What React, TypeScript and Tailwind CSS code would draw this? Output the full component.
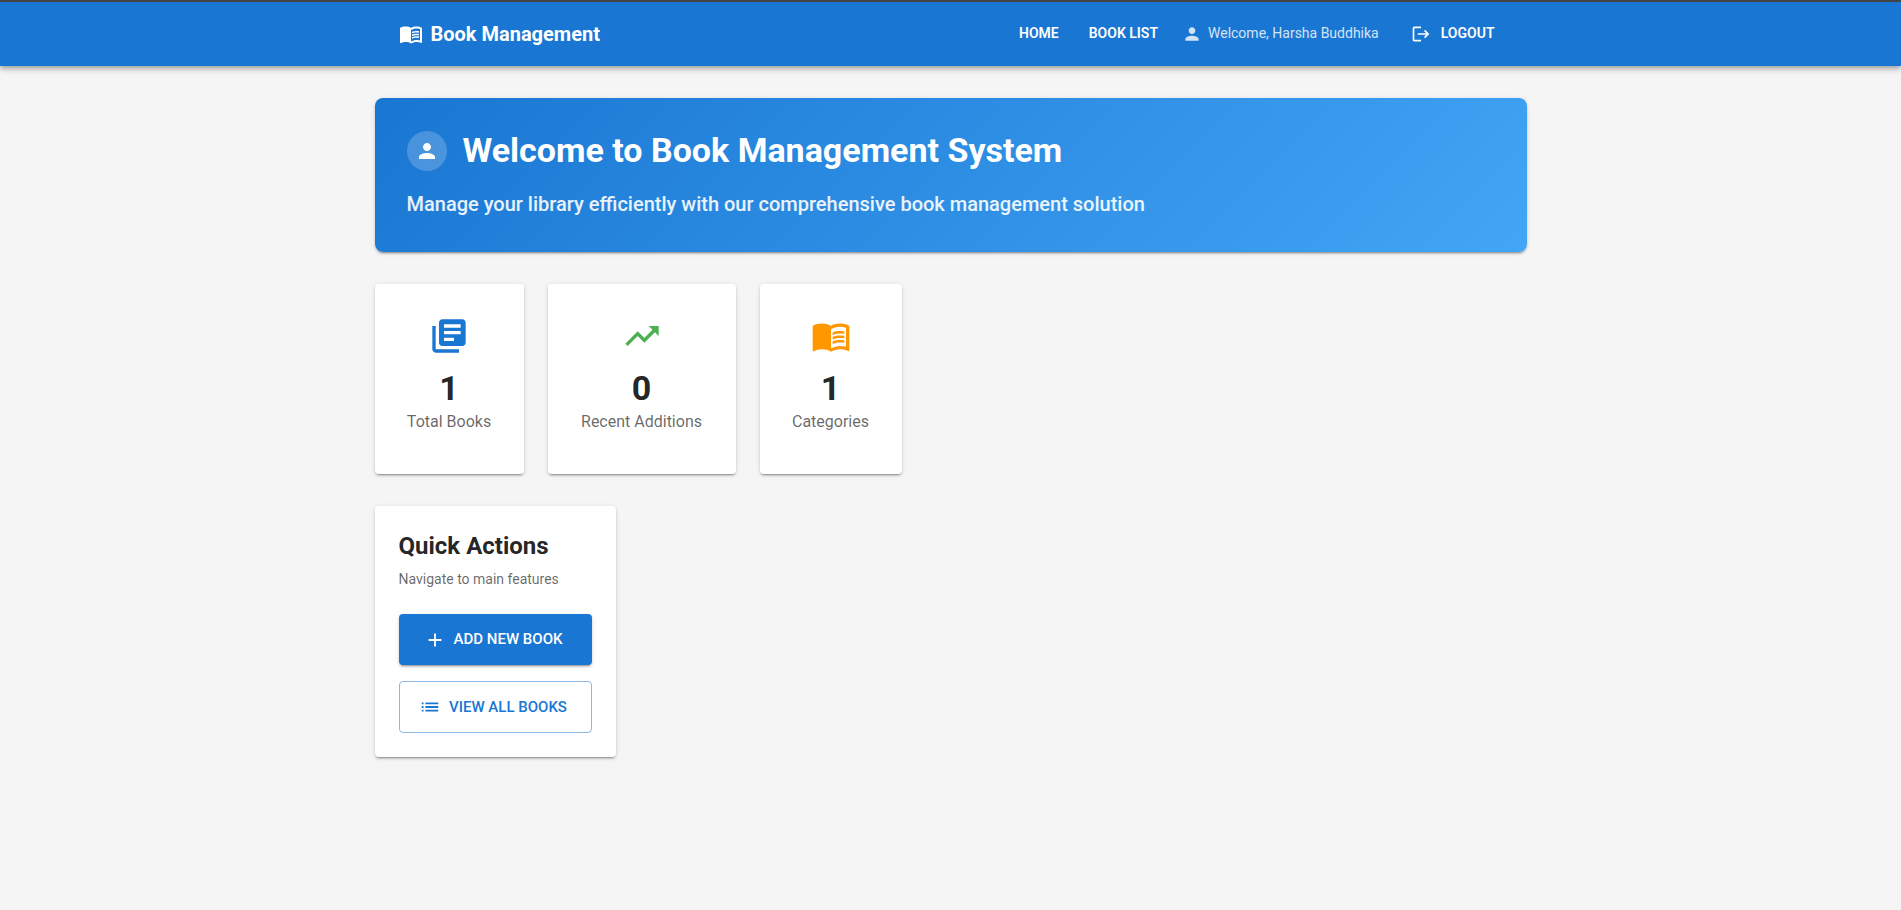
import type { ReactNode } from "react";
import {
  MdAdd,
  MdLibraryBooks,
  MdList,
  MdLogout,
  MdMenuBook,
  MdPerson,
  MdTrendingUp,
} from "react-icons/md";

const cardShadow =
  "shadow-[0px_3px_1px_-2px_rgba(0,0,0,0.2),0px_2px_2px_0px_rgba(0,0,0,0.14),0px_1px_5px_0px_rgba(0,0,0,0.12)]";

function Header() {
  return (
    <header className="border-t-2 border-[#424242] bg-[#1976d2] text-white shadow-[0px_2px_4px_-1px_rgba(0,0,0,0.2),0px_4px_5px_0px_rgba(0,0,0,0.14),0px_1px_10px_0px_rgba(0,0,0,0.12)]">
      <div className="mx-auto flex h-16 max-w-[1152px] items-center justify-between px-6">
        <a href="#home" className="flex items-center gap-2 text-xl font-bold">
          <MdMenuBook className="size-6" />
          Book Management
        </a>
        <nav className="flex items-center text-sm">
          <a href="#home" className="px-2 pb-0.5 font-semibold">
            HOME
          </a>
          <a href="#books" className="ml-3.5 px-2 pb-0.5 font-semibold">
            BOOK LIST
          </a>
          <span className="ml-4 flex items-center gap-1.5">
            <MdPerson className="size-5 opacity-80" />
            <span className="pb-0.5 opacity-80">Welcome, Harsha Buddhika</span>
          </span>
          <button type="button" className="ml-6 flex items-center gap-2.5 px-2 font-semibold">
            <MdLogout className="size-5" />
            <span className="pb-0.5">LOGOUT</span>
          </button>
        </nav>
      </div>
    </header>
  );
}

function Hero() {
  return (
    <section
      className={`rounded-lg bg-[linear-gradient(135deg,#1976d2_0%,#42a5f5_100%)] p-8 text-white ${cardShadow}`}
    >
      <div className="mb-4 flex items-center gap-4">
        <span className="flex size-10 items-center justify-center rounded-full bg-white/20">
          <MdPerson className="size-6" />
        </span>
        <h1 className="pb-0.5 text-[34px] leading-10 font-bold">Welcome to Book Management System</h1>
      </div>
      <p className="text-xl leading-8 font-medium text-white/90">
        Manage your library efficiently with our comprehensive book management solution
      </p>
    </section>
  );
}

type StatProps = { icon: ReactNode; value: number; label: string; width: string };

function StatCard({ icon, value, label, width }: StatProps) {
  return (
    <div
      className={`flex flex-col items-center rounded bg-white pt-8 pb-10 whitespace-nowrap ${width} ${cardShadow}`}
    >
      {icon}
      <p className="mt-3 pb-0.5 text-[34px] leading-10 font-bold">{value}</p>
      <p className="text-base text-black/60">{label}</p>
    </div>
  );
}

function QuickActions() {
  return (
    <section className={`w-[241px] rounded bg-white p-6 ${cardShadow}`}>
      <h2 className="text-2xl font-bold">Quick Actions</h2>
      <p className="mt-2 pb-0.5 text-sm leading-[18px] text-black/60">Navigate to main features</p>
      <div className="mt-6 flex flex-col gap-4 text-[15px] font-medium">
        <button
          type="button"
          className="flex h-[51px] items-center justify-center gap-2 rounded bg-[#1976d2] pr-1 text-white shadow-[0px_3px_1px_-2px_rgba(0,0,0,0.2),0px_2px_2px_0px_rgba(0,0,0,0.14),0px_1px_5px_0px_rgba(0,0,0,0.12)]"
        >
          <MdAdd className="size-[22px]" />
          ADD NEW BOOK
        </button>
        <button
          type="button"
          className="flex h-[52px] items-center justify-center gap-2 rounded border border-[#1976d2]/50 pr-1 text-[#1976d2]"
        >
          <MdList className="size-[22px]" />
          VIEW ALL BOOKS
        </button>
      </div>
    </section>
  );
}

export default function App() {
  return (
    <div className="min-h-screen bg-[#f5f5f5] font-['Roboto',sans-serif] text-black/87">
      <Header />
      <main className="mx-auto flex max-w-[1152px] flex-col gap-8 py-8">
        <Hero />
        <div className="flex flex-wrap gap-6">
          <StatCard
            icon={<MdLibraryBooks className="size-10 text-[#1976d2]" />}
            value={1}
            label="Total Books"
            width="w-[149px]"
          />
          <StatCard
            icon={<MdTrendingUp className="size-10 text-[#4caf50]" />}
            value={0}
            label="Recent Additions"
            width="w-[188px]"
          />
          <StatCard
            icon={<MdMenuBook className="size-10 text-[#ff9800]" />}
            value={1}
            label="Categories"
            width="w-[142px]"
          />
        </div>
        <QuickActions />
      </main>
    </div>
  );
}
